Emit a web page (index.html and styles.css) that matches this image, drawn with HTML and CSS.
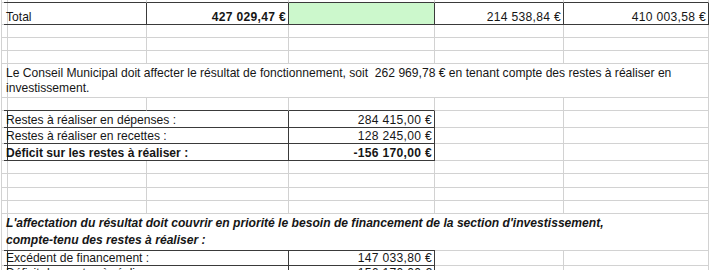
FILE: index.html
```html
<!DOCTYPE html>
<html lang="fr">
<head>
<meta charset="utf-8">
<title>Affectation du résultat</title>
<link rel="stylesheet" href="styles.css">
</head>
<body>
<div class="sheet">
  <!-- top partial row -->
  <div class="c r0"></div><div class="c bb"></div><div class="c bb"></div><div class="c bb"></div><div class="c bb"></div><div class="c bb"></div>
  <!-- total -->
  <div class="c"></div>
  <div class="c bb br">Total</div>
  <div class="c bb br num b">427 029,47 €</div>
  <div class="c bb br green"></div>
  <div class="c bb br num">214 538,84 €</div>
  <div class="c bb br num">410 003,58 €</div>
  <!-- empty -->
  <div class="c"></div><div class="c"></div><div class="c"></div><div class="c"></div><div class="c"></div><div class="c"></div>
  <div class="c"></div><div class="c"></div><div class="c"></div><div class="c"></div><div class="c"></div><div class="c"></div>
  <div class="c"></div><div class="c"></div><div class="c"></div><div class="c"></div><div class="c"></div><div class="c"></div>
  <!-- paragraph -->
  <div class="c"></div>
  <div class="c s5 para">Le Conseil Municipal doit affecter le résultat de fonctionnement, soit &nbsp;262 969,78 € en tenant compte des restes à réaliser en<br>investissement.</div>
  <!-- empty above box -->
  <div class="c"></div><div class="c bb"></div><div class="c bb"></div><div class="c bb"></div><div class="c"></div><div class="c"></div>
  <!-- box rows -->
  <div class="c br"></div><div class="c s2 bb br">Restes à réaliser en dépenses :</div><div class="c bb br num">284 415,00 €</div><div class="c"></div><div class="c"></div>
  <div class="c br"></div><div class="c s2 bb br">Restes à réaliser en recettes :</div><div class="c bb br num">128 245,00 €</div><div class="c"></div><div class="c"></div>
  <div class="c br"></div><div class="c s2 bb br b">Déficit sur les restes à réaliser :</div><div class="c bb br num b">-156 170,00 €</div><div class="c"></div><div class="c"></div>
  <!-- empty -->
  <div class="c"></div><div class="c"></div><div class="c"></div><div class="c"></div><div class="c"></div><div class="c"></div>
  <div class="c"></div><div class="c"></div><div class="c"></div><div class="c"></div><div class="c"></div><div class="c"></div>
  <div class="c"></div><div class="c"></div><div class="c"></div><div class="c"></div><div class="c"></div><div class="c"></div>
  <div class="c"></div><div class="c"></div><div class="c"></div><div class="c"></div><div class="c"></div><div class="c"></div>
  <!-- italic paragraph -->
  <div class="c"></div>
  <div class="c s3 bb nor ital">L'affectation du résultat doit couvrir en priorité le besoin de financement de la section d'investissement,<br>compte-tenu des restes à réaliser :</div>
  <div class="c s2"></div>
  <!-- box 2 -->
  <div class="c br"></div><div class="c s2 bb br">Excédent de financement :</div><div class="c bb br num">147 033,80 €</div><div class="c"></div><div class="c"></div>
  <div class="c br"></div><div class="c s2 bb br">Déficit des restes à réaliser :</div><div class="c bb br num">156 170,00 €</div><div class="c"></div><div class="c"></div>
</div>
</body>
</html>
```

FILE: styles.css
```css
html, body {
  margin: 0;
  padding: 0;
  background: #ffffff;
  overflow: hidden;
}

.sheet {
  margin-left: 1px;
  border-left: 1px solid #d2d2d2;
  display: grid;
  grid-template-columns: 2px 143px 142px 146px 129px 145px;
  grid-template-rows: 3px 22px 13px 13px 13px 34px 13px 17px 16px 17px 13px 14px 13px 13px 37px 15px 15px;
  font-family: "Liberation Sans", Arial, sans-serif;
  font-size: 12.1px;
  line-height: 14px;
  color: #161616;
}

.c {
  box-sizing: border-box;
  border-right: 1px solid #d2d2d2;
  border-bottom: 1px solid #d2d2d2;
  display: flex;
  align-items: flex-end;
  padding: 0 3px 0 2px;
  white-space: nowrap;
  overflow: visible;
  min-width: 0;
}

.bb { border-bottom-color: #3a3a3a; }
.br { border-right-color: #3a3a3a; }

.num {
  justify-content: flex-end;
  padding-right: 2px;
  letter-spacing: 0.3px;
}

.b { font-weight: bold; }

.green { background: #ccf8cc; }

.s2 { grid-column: span 2; }
.s3 { grid-column: span 3; }
.s5 { grid-column: span 5; }

.para {
  line-height: 15px;
  padding-bottom: 1px;
}

.nor { border-right: none; }

.ital {
  font-weight: bold;
  font-style: italic;
  line-height: 17px;
  padding-bottom: 1px;
}
```
